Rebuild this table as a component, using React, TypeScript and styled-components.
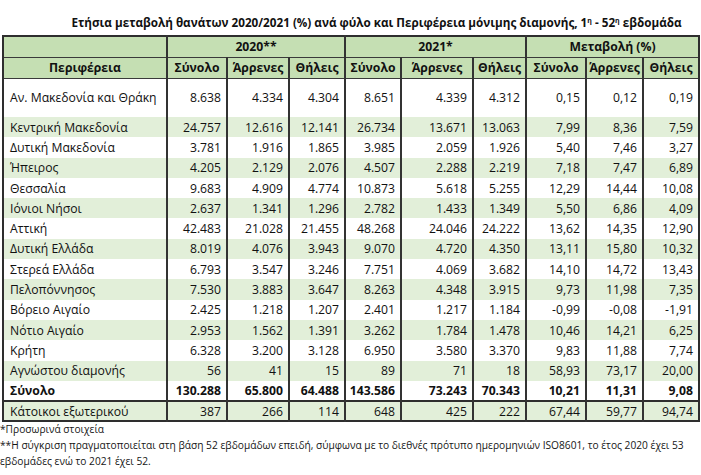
import React from "react";
import styled, { createGlobalStyle } from "styled-components";

const Global = createGlobalStyle`
  html, body { margin: 0; padding: 0; background: #ffffff; }
  body { font-family: "Open Sans", "Noto Sans", sans-serif; color: #111111; }
`;

const Page = styled.div`
  width: 701px;
  height: 475px;
  overflow: hidden;
  display: flex;
  flex-direction: column;
`;

const Title = styled.div`
  margin-top: 12px;
  height: 21px;
  line-height: 21px;
  padding-left: 52px;
  text-align: center;
  font-weight: 700;
  font-size: 11.7px;
  color: #111111;
  white-space: nowrap;
  sup { font-size: 7px; vertical-align: 4px; line-height: 0; }
`;

const TableWrap = styled.div`
  margin-top: 2px;
  padding-left: 2px;
`;

const Table = styled.table`
  border-collapse: collapse;
  table-layout: fixed;
  width: 696px;
  border: 2px solid #2e2e2e;
  font-size: 12.2px;
`;

const HeadRow = styled.tr`
  background: #c5dfb3;
  height: 21px;
`;

const HeadCell = styled.th`
  font-weight: 700;
  font-size: 12.2px;
  text-align: center;
  padding: 0;
  border-left: 2px solid #333333;
  border-bottom: 1.5px solid #3a3a3a;
  color: #111111;
  white-space: nowrap;
`;

const Row = styled.tr<{ $shade: boolean; $tall?: boolean; $boxed?: boolean }>`
  background: ${(p) => (p.$shade ? "#e2efd9" : "#ffffff")};
  height: ${(p) => (p.$tall ? "39px" : "20.3px")};
  ${(p) => (p.$boxed ? "border-top: 2px solid #2e2e2e;" : "")}
`;

const NameCell = styled.td<{ $bold?: boolean }>`
  padding: 0 0 0 6px;
  text-align: left;
  font-weight: ${(p) => (p.$bold ? 700 : 400)};
  white-space: nowrap;
`;

const NumCell = styled.td<{ $bold?: boolean }>`
  padding: 0 5px 0 0;
  text-align: right;
  font-weight: ${(p) => (p.$bold ? 700 : 400)};
  border-left: 2px solid #333333;
  white-space: nowrap;
`;

const Notes = styled.div`
  margin-top: -1px;
  font-size: 10.2px;
  line-height: 16px;
  color: #161616;
  white-space: nowrap;
`;

const widths = [164, 60, 62, 56, 56, 72, 53, 60, 57, 56];

type Data = { name: string; vals: string[]; bold?: boolean };

const rows: Data[] = [
  { name: "Αν. Μακεδονία και Θράκη", vals: ["8.638", "4.334", "4.304", "8.651", "4.339", "4.312", "0,15", "0,12", "0,19"] },
  { name: "Κεντρική Μακεδονία", vals: ["24.757", "12.616", "12.141", "26.734", "13.671", "13.063", "7,99", "8,36", "7,59"] },
  { name: "Δυτική Μακεδονία", vals: ["3.781", "1.916", "1.865", "3.985", "2.059", "1.926", "5,40", "7,46", "3,27"] },
  { name: "Ήπειρος", vals: ["4.205", "2.129", "2.076", "4.507", "2.288", "2.219", "7,18", "7,47", "6,89"] },
  { name: "Θεσσαλία", vals: ["9.683", "4.909", "4.774", "10.873", "5.618", "5.255", "12,29", "14,44", "10,08"] },
  { name: "Ιόνιοι Νήσοι", vals: ["2.637", "1.341", "1.296", "2.782", "1.433", "1.349", "5,50", "6,86", "4,09"] },
  { name: "Αττική", vals: ["42.483", "21.028", "21.455", "48.268", "24.046", "24.222", "13,62", "14,35", "12,90"] },
  { name: "Δυτική Ελλάδα", vals: ["8.019", "4.076", "3.943", "9.070", "4.720", "4.350", "13,11", "15,80", "10,32"] },
  { name: "Στερεά Ελλάδα", vals: ["6.793", "3.547", "3.246", "7.751", "4.069", "3.682", "14,10", "14,72", "13,43"] },
  { name: "Πελοπόννησος", vals: ["7.530", "3.883", "3.647", "8.263", "4.348", "3.915", "9,73", "11,98", "7,35"] },
  { name: "Βόρειο Αιγαίο", vals: ["2.425", "1.218", "1.207", "2.401", "1.217", "1.184", "-0,99", "-0,08", "-1,91"] },
  { name: "Νότιο Αιγαίο", vals: ["2.953", "1.562", "1.391", "3.262", "1.784", "1.478", "10,46", "14,21", "6,25"] },
  { name: "Κρήτη", vals: ["6.328", "3.200", "3.128", "6.950", "3.580", "3.370", "9,83", "11,88", "7,74"] },
  { name: "Αγνώστου διαμονής", vals: ["56", "41", "15", "89", "71", "18", "58,93", "73,17", "20,00"] },
  { name: "Σύνολο", vals: ["130.288", "65.800", "64.488", "143.586", "73.243", "70.343", "10,21", "11,31", "9,08"], bold: true },
  { name: "Κάτοικοι εξωτερικού", vals: ["387", "266", "114", "648", "425", "222", "67,44", "59,77", "94,74"] },
];

const groups = ["2020**", "2021*", "Μεταβολή (%)"];
const subs = ["Σύνολο", "Άρρενες", "Θήλεις"];

export default function App() {
  return (
    <Page>
      <Global />
      <Title>
        Ετήσια μεταβολή θανάτων 2020/2021 (%) ανά φύλο και Περιφέρεια μόνιμης διαμονής, 1<sup>η</sup> - 52<sup>η</sup> εβδομάδα
      </Title>
      <TableWrap>
        <Table>
          <colgroup>
            {widths.map((w, i) => (
              <col key={i} style={{ width: w }} />
            ))}
          </colgroup>
          <thead>
            <HeadRow>
              <HeadCell style={{ borderLeft: "none" }} />
              {groups.map((g) => (
                <HeadCell key={g} colSpan={3}>
                  {g}
                </HeadCell>
              ))}
            </HeadRow>
            <HeadRow>
              <HeadCell style={{ borderLeft: "none" }}>Περιφέρεια</HeadCell>
              {groups.map((g) =>
                subs.map((s) => <HeadCell key={g + s}>{s}</HeadCell>)
              )}
            </HeadRow>
          </thead>
          <tbody>
            {rows.map((r, i) => (
              <Row key={r.name} $shade={i % 2 === 1} $tall={i === 0} $boxed={i === rows.length - 1}>
                <NameCell $bold={r.bold}>{r.name}</NameCell>
                {r.vals.map((v, j) => (
                  <NumCell key={j} $bold={r.bold}>
                    {v}
                  </NumCell>
                ))}
              </Row>
            ))}
          </tbody>
        </Table>
      </TableWrap>
      <Notes>
        <div>*Προσωρινά στοιχεία</div>
        <div>
          **Η σύγκριση πραγματοποιείται στη βάση 52 εβδομάδων επειδή, σύμφωνα με το διεθνές πρότυπο ημερομηνιών ISO8601, το έτος 2020 έχει 53
        </div>
        <div>εβδομάδες ενώ το 2021 έχει 52.</div>
      </Notes>
    </Page>
  );
}
